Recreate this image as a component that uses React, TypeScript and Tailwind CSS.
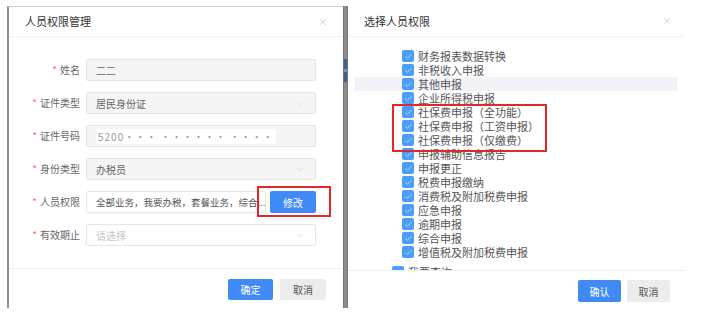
import React from 'react';
import { ChevronDown, X, Check } from 'lucide-react';

const font = { fontFamily: '"Noto Sans CJK SC", "Noto Sans", sans-serif' };

interface FieldProps {
    label: string;
    children: React.ReactNode;
}

const Field: React.FC<FieldProps> = ({ label, children }) => (
    <div className="flex items-center h-[22px]">
        <div className="w-[71px] text-right text-[10px] text-[#666] leading-none">
            <span className="text-[#f56c6c] mr-[3px]">*</span>
            {label}
        </div>
        <div className="ml-[6px] w-[230px] h-full flex">{children}</div>
    </div>
);

const GrayInput: React.FC<{ text: string; select?: boolean }> = ({ text, select }) => (
    <div className="flex-1 flex items-center justify-between bg-[#f5f5f5] border border-[#e6e6e6] rounded-[2px] px-[9px] text-[10px] text-[#666]">
        <span>{text}</span>
        {select && <ChevronDown size={11} strokeWidth={1.2} className="text-[#c8c8c8]" />}
    </div>
);

const items: { label: string; level?: number }[] = [
    { label: '财务报表数据转换' },
    { label: '非税收入申报' },
    { label: '其他申报' },
    { label: '企业所得税申报' },
    { label: '社保费申报（全功能）' },
    { label: '社保费申报（工资申报）' },
    { label: '社保费申报（仅缴费）' },
    { label: '申报辅助信息报告' },
    { label: '申报更正' },
    { label: '税费申报缴纳' },
    { label: '消费税及附加税费申报' },
    { label: '应急申报' },
    { label: '逾期申报' },
    { label: '综合申报' },
    { label: '增值税及附加税费申报' },
    { label: '我要查询', level: 0 },
];

const CheckBox = () => (
    <span className="w-[12px] h-[12px] rounded-[2px] bg-[#4b9ef7] flex items-center justify-center shrink-0">
        <Check size={9} strokeWidth={2} className="text-[#cfe4ff]" />
    </span>
);

const App: React.FC = () => {
    return (
        <div className="w-[704px] h-[315px] bg-white flex pt-[6px] pl-[7px] overflow-hidden" style={font}>
            {/* left dialog */}
            <div className="relative w-[336px] h-[302px] border-l-2 border-t border-l-[#8f8f8f] border-t-[#cfcfcf] flex flex-col bg-white">
                <div className="h-[30px] flex items-center justify-between pl-[16px] pr-[15px] border-b border-[#f2f2f2]">
                    <span className="text-[11px] text-[#333]">人员权限管理</span>
                    <X size={10} strokeWidth={1.2} className="text-[#aaa]" />
                </div>
                <div className="flex-1 flex flex-col gap-[11px] pt-[22px]">
                    <Field label="姓名"><GrayInput text="二二" /></Field>
                    <Field label="证件类型"><GrayInput text="居民身份证" select /></Field>
                    <Field label="证件号码">
                        <div className="flex-1 flex items-center bg-[#f5f5f5] border border-[#e6e6e6] rounded-[2px] px-[9px] text-[10px] text-[#777]">
                            <span className="bg-white px-[2px] text-[#999] tracking-[1px]">5200··· ······ ····</span>
                        </div>
                    </Field>
                    <Field label="身份类型"><GrayInput text="办税员" select /></Field>
                    <Field label="人员权限">
                        <div className="flex-1 min-w-0 flex items-center border border-[#e6e6e6] rounded-[2px] pl-[9px] text-[9.5px] text-[#555] bg-white overflow-hidden whitespace-nowrap">
                            全部业务，我要办税，套餐业务，综合...
                        </div>
                        <button className="ml-[4px] w-[46px] h-full bg-[#3f8af5] text-white text-[10px] rounded-[2px] shrink-0">修改</button>
                    </Field>
                    <Field label="有效期止">
                        <div className="flex-1 flex items-center justify-between border border-[#e6e6e6] rounded-[2px] px-[9px] text-[10px] text-[#c4c4c4] bg-white">
                            <span>请选择</span>
                            <ChevronDown size={11} strokeWidth={1.2} className="text-[#c8c8c8]" />
                        </div>
                    </Field>
                </div>
                <div className="h-[40px] border-t border-[#eeeeee] flex justify-end gap-[7px] pt-[10px] pr-[17px]">
                    <button className="w-[45px] h-[21px] bg-[#3f8af5] text-white text-[10px] rounded-[2px]">确定</button>
                    <button className="w-[46px] h-[21px] bg-[#ececec] text-[#555] text-[10px] rounded-[2px]">取消</button>
                </div>
                <div className="absolute left-[248px] top-[179px] w-[74px] h-[31px] border-2 border-[#e3262b]" />
            </div>

            {/* separator strip */}
            <div className="w-[5px] h-[302px] bg-[#8c8c8c] border-x border-[#777] flex flex-col">
                <div className="h-[53px]" />
                <div className="h-[10px] bg-[#3d5f9c]" />
                <div className="h-[3px]" />
                <div className="h-[10px] bg-[#3d5f9c]" />
            </div>

            {/* right dialog */}
            <div className="relative w-[336px] h-[302px] flex flex-col bg-white">
                <div className="h-[31px] flex items-center justify-between pl-[16px] pr-[12px] border-b border-[#f2f2f2]">
                    <span className="text-[11px] text-[#333]">选择人员权限</span>
                    <X size={10} strokeWidth={1.2} className="text-[#aaa]" />
                </div>
                <div className="flex-1 overflow-hidden px-[7px] pt-[12px]">
                    {items.map((it, i) => (
                        <div
                            key={it.label}
                            className={`h-[14px] flex items-center gap-[4px] ${it.level === 0 ? 'pl-[37px] mt-[6px]' : 'pl-[47px]'} ${i === 2 ? 'bg-[#f1f3f8]' : ''}`}
                        >
                            <CheckBox />
                            <span className="text-[11px] text-[#555] leading-none whitespace-nowrap">{it.label}</span>
                        </div>
                    ))}
                </div>
                <div className="h-[38px] border-t border-[#eeeeee] flex justify-end gap-[6px] pt-[9px] pr-[14px]">
                    <button className="w-[43px] h-[22px] bg-[#3f8af5] text-white text-[10px] rounded-[2px]">确认</button>
                    <button className="w-[43px] h-[22px] bg-[#ececec] text-[#555] text-[10px] rounded-[2px]">取消</button>
                </div>
                <div className="absolute left-[44px] top-[98px] w-[155px] h-[48px] border-2 border-[#e3262b]" />
            </div>
        </div>
    );
};

export default App;
